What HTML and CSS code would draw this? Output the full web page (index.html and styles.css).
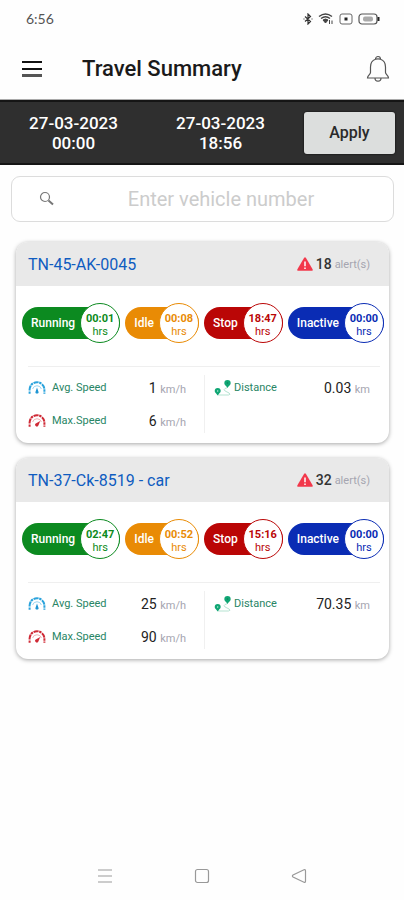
FILE: index.html
```html
<!DOCTYPE html>
<html lang="en">
<head>
<meta charset="utf-8">
<meta name="viewport" content="width=device-width, initial-scale=1">
<title>Travel Summary</title>
<link rel="stylesheet" href="styles.css">
</head>
<body>
<svg class="sprite" aria-hidden="true">
  <symbol id="alert" viewBox="0 0 16 14">
    <path d="M7 .9Q8 -.6 9 .9L15.6 12.2Q16.2 13.7 14.6 13.8H1.4Q-.2 13.7.4 12.2Z" fill="#f2384b"/>
    <path d="M8 4.4v4.8M8 10.6v1.5" stroke="#fff" stroke-width="1.5"/>
  </symbol>
  <symbol id="gauge-avg" viewBox="0 0 18 14">
    <path d="M4.600 8A4.600 4.600 0 0 1 13.400 8" fill="none" stroke="#9bd6f2" stroke-width="1"/>
    <path d="M1.600 12.800V8.600A7.400 7.400 0 0 1 16.400 8.600V12.800" fill="none" stroke="#2ba3dc" stroke-width="2" stroke-dasharray="2.400 .8 5.200 .6"/>
    <path d="M9 6.600l1.400 3.800a1.500 1.500 0 1 1-2.800 0z" fill="#2196d3"/>
  </symbol>
  <symbol id="gauge-max" viewBox="0 0 18 14">
    <path d="M4.600 8A4.600 4.600 0 0 1 13.400 8" fill="none" stroke="#f0b0b4" stroke-width="1"/>
    <path d="M1.600 12.800V8.600A7.400 7.400 0 0 1 16.400 8.600V12.800" fill="none" stroke="#cf2a36" stroke-width="2" stroke-dasharray="2.400 .8 5.200 .6"/>
    <path d="M12.200 7l-1.800 4.600a1.700 1.700 0 1 1-2.200-2.400z" fill="#cf2a36"/>
  </symbol>
  <symbol id="route" viewBox="0 0 18 18">
    <path d="M4 16h10.500q2.500-.4.600-2l-4-2q-2-1.500 0-2.500l2-.8" fill="none" stroke="#b5e3d1" stroke-width="1"/>
    <path d="M13.500 1a3.200 3.200 0 0 1 3.200 3.200c0 1.800-2 2.600-3.200 4.800-1.200-2.200-3.200-3-3.200-4.800A3.200 3.200 0 0 1 13.500 1z" fill="#10a674"/>
    <path d="M3.700 9a3 3 0 0 1 3 3c0 1.700-1.800 2.400-3 4.600-1.200-2.200-3-2.900-3-4.600a3 3 0 0 1 3-3z" fill="#10a674"/>
    <circle cx="3.700" cy="12" r=".7" fill="#c9f0e1"/>
    <circle cx="13.500" cy="4" r=".8" fill="#0b8059"/>
  </symbol>
</svg>

<div class="status">
  <span class="clock">6:56</span>
  <span class="status-icons">
    <svg width="10" height="12" viewBox="0 0 10 12" fill="none" stroke="#333"><path d="M2 3.500l5.500 5L5 11V1l2.500 2.500L2 8.500M.5 6h1M8.500 6h1" stroke-width="1.200"/></svg>
    <svg width="16" height="12" viewBox="0 0 16 12" fill="none" stroke="#444"><path d="M1 3.500Q7.500-1.500 14 3.500M3 5.500Q7.500 2 12 5.500" stroke-width="1.400"/><path d="M5 7q2.500-2 5 0L7.500 10z" fill="#444"/><path d="M11.500 7v4M14 11V7.500" stroke-width="1"/></svg>
    <svg width="14" height="12" viewBox="0 0 14 12"><rect x="1" y="1" width="12" height="10" rx="2" fill="none" stroke="#666"/><rect x="5.500" y="4.500" width="3" height="3" fill="#222"/></svg>
    <svg width="22" height="12" viewBox="0 0 22 12"><rect x="1" y="1" width="18" height="10" rx="3" fill="none" stroke="#555" stroke-width="1.200"/><rect x="5" y="3.500" width="10" height="5" rx="2" fill="#aaa"/><path d="M20.500 4v4" stroke="#222" stroke-width="2"/></svg>
  </span>
</div>

<header class="appbar">
  <button class="icon-btn" aria-label="Menu">
    <svg width="22" height="18" viewBox="0 0 22 18"><path d="M1 2h20M1 9h20" stroke="#111" stroke-width="2"/><path d="M1 15.500h20" stroke="#555" stroke-width="3"/></svg>
  </button>
  <h1>Travel Summary</h1>
  <button class="icon-btn" aria-label="Notifications">
    <svg width="24" height="28" viewBox="0 0 24 28" fill="none" stroke="#555" stroke-width="1.200"><path d="M9.500 4.300a2.500 2.800 0 1 1 5 0M9.500 4.300C6 5.500 4.500 8.500 4.500 12v5.500c0 2-3 3-3 5.500h21c0-2.500-3-3.500-3-5.500V12c0-3.500-1.500-6.500-5-7.700M9.500 4.300q2.500-.8 5 0M9 23a3 3.200 0 0 0 6 0"/></svg>
  </button>
</header>

<div class="range">
  <button class="date">27-03-2023<br>00:00</button>
  <button class="date">27-03-2023<br>18:56</button>
  <button class="apply">Apply</button>
</div>

<main>
  <label class="search">
    <svg width="16" height="16" viewBox="0 0 16 16" fill="none" stroke="#777"><circle cx="6" cy="6" r="4.500" stroke-width="1.200"/><path d="M9.500 9.500l4.500 4" stroke-width="2"/></svg>
    <input type="text" placeholder="Enter vehicle number" aria-label="Vehicle number">
  </label>

  <article class="card">
    <div class="card-head">
      <a href="#">TN-45-AK-0045</a>
      <span class="alerts"><svg width="16" height="14"><use href="#alert"/></svg><b>18</b><small>alert(s)</small></span>
    </div>
    <div class="pills">
      <div class="pill running"><span>Running</span><div class="time"><b>00:01</b>hrs</div></div>
      <div class="pill idle"><span>Idle</span><div class="time"><b>00:08</b>hrs</div></div>
      <div class="pill stop"><span>Stop</span><div class="time"><b>18:47</b>hrs</div></div>
      <div class="pill inactive"><span>Inactive</span><div class="time"><b>00:00</b>hrs</div></div>
    </div>
    <div class="stats">
      <div class="col">
        <div class="stat"><svg width="18" height="14"><use href="#gauge-avg"/></svg><span class="name">Avg. Speed</span><span class="value">1 <small>km/h</small></span></div>
        <div class="stat"><svg width="18" height="14"><use href="#gauge-max"/></svg><span class="name">Max.Speed</span><span class="value">6 <small>km/h</small></span></div>
      </div>
      <div class="col distance">
        <div class="stat"><svg width="18" height="18"><use href="#route"/></svg><span class="name">Distance</span><span class="value">0.03 <small>km</small></span></div>
      </div>
    </div>
  </article>

  <article class="card">
    <div class="card-head">
      <a href="#">TN-37-Ck-8519 - car</a>
      <span class="alerts"><svg width="16" height="14"><use href="#alert"/></svg><b>32</b><small>alert(s)</small></span>
    </div>
    <div class="pills">
      <div class="pill running"><span>Running</span><div class="time"><b>02:47</b>hrs</div></div>
      <div class="pill idle"><span>Idle</span><div class="time"><b>00:52</b>hrs</div></div>
      <div class="pill stop"><span>Stop</span><div class="time"><b>15:16</b>hrs</div></div>
      <div class="pill inactive"><span>Inactive</span><div class="time"><b>00:00</b>hrs</div></div>
    </div>
    <div class="stats">
      <div class="col">
        <div class="stat"><svg width="18" height="14"><use href="#gauge-avg"/></svg><span class="name">Avg. Speed</span><span class="value">25 <small>km/h</small></span></div>
        <div class="stat"><svg width="18" height="14"><use href="#gauge-max"/></svg><span class="name">Max.Speed</span><span class="value">90 <small>km/h</small></span></div>
      </div>
      <div class="col distance">
        <div class="stat"><svg width="18" height="18"><use href="#route"/></svg><span class="name">Distance</span><span class="value">70.35 <small>km</small></span></div>
      </div>
    </div>
  </article>
</main>

<nav class="sysnav">
  <button class="icon-btn" aria-label="Recent apps"><svg width="16" height="16" viewBox="0 0 16 16"><path d="M1 2h14M1 14h14" stroke="#999" stroke-width="1.200"/><path d="M1 8h14" stroke="#ccc" stroke-width="2"/></svg></button>
  <button class="icon-btn" aria-label="Home"><svg width="16" height="16" viewBox="0 0 16 16"><rect x="1.500" y="1.500" width="13" height="13" rx="2" fill="none" stroke="#999" stroke-width="1.200"/></svg></button>
  <button class="icon-btn" aria-label="Back"><svg width="16" height="16" viewBox="0 0 16 16"><path d="M13 1.800Q14.500 1.200 14.500 3v10q0 1.800-1.500 1.200L2 9Q.8 8 2 7z" fill="none" stroke="#999" stroke-width="1.200"/></svg></button>
</nav>
</body>
</html>
```

FILE: styles.css
```css
* {
  box-sizing: border-box;
}

body {
  margin: 0;
  min-height: 100vh;
  display: flex;
  flex-direction: column;
  background: #fefefe;
  font-family: Roboto, "Liberation Sans", sans-serif;
  color: #222;
}

.sprite {
  position: absolute;
  width: 0;
  height: 0;
}

svg {
  display: block;
  flex: none;
}

button {
  border: 0;
  padding: 0;
  background: none;
  font: inherit;
  color: inherit;
}

.status {
  display: flex;
  justify-content: space-between;
  align-items: center;
  height: 37px;
  padding: 0 24px 0 26px;
}

.clock {
  font-family: Lato, sans-serif;
  font-size: 14px;
  color: #555;
}

.status-icons {
  display: flex;
  gap: 5px;
}

.appbar {
  display: flex;
  align-items: center;
  height: 63px;
  padding: 1px 14px 0 21px;
  border-bottom: 1px solid #aaa;
}

h1 {
  flex: 1;
  margin: 0 0 0 39px;
  font-size: 22px;
  line-height: 28px;
  font-weight: 500;
  color: #1a1a1a;
}

.range {
  display: flex;
  align-items: center;
  height: 65px;
  padding: 0 9px 0 0;
  background: #2f2f2f;
  border: solid #151515;
  border-width: 2px 0;
}

.date {
  flex: 1;
  font-size: 17px;
  line-height: 20px;
  font-weight: 500;
  color: #fff;
}

.apply {
  width: 91px;
  height: 42px;
  margin-left: 10px;
  border-radius: 3px;
  background: #dcdedd;
  box-shadow: 0 0 2px #000;
  font-size: 16px;
  font-weight: 500;
  color: #2a2a2a;
}

main {
  flex: 1;
  padding: 11px 10px 0 11px;
}

.search {
  display: flex;
  align-items: center;
  height: 46px;
  padding: 0 28px 0 27px;
  border: 1px solid #dcdcdc;
  border-radius: 9px;
  background: #fff;
}

.search input {
  flex: 1;
  min-width: 0;
  margin-left: 22px;
  padding: 0;
  border: 0;
  outline: 0;
  background: none;
  font: 20px/24px Roboto, "Liberation Sans", sans-serif;
  text-align: center;
}

.search input::placeholder {
  color: #ccc;
}

.card {
  margin: 20px 5px 0;
  border-radius: 12px;
  background: #fff;
  box-shadow: 0 1px 4px rgba(0, 0, 0, 0.35);
  overflow: hidden;
}

.card + .card {
  margin-top: 15px;
}

.card-head {
  display: flex;
  align-items: center;
  justify-content: space-between;
  height: 44px;
  padding: 0 19px 0 12px;
  background: #e9e9e9;
}

.card-head a {
  font-size: 16px;
  color: #0f5cc0;
  text-decoration: none;
}

.alerts {
  display: flex;
  align-items: center;
  gap: 3px;
  font-size: 14px;
}

.alerts b {
  font-weight: 500;
  color: #333;
}

small {
  font-size: 11px;
  color: #a5a5b0;
}

.pills {
  display: flex;
  justify-content: space-between;
  padding: 17px 5px 23px 6px;
}

.pill {
  display: flex;
  align-items: center;
  justify-content: space-between;
  height: 32px;
  margin: 4px 0;
  padding-left: 9px;
  border-radius: 16px;
  background: var(--tone);
  font-size: 12px;
  font-weight: 500;
  color: #fff;
}

.pill span {
  margin-right: 5px;
}

.time {
  width: 40px;
  height: 40px;
  padding-top: 8px;
  border: 1px solid var(--tone);
  border-radius: 50%;
  background: #fff;
  font-size: 11px;
  line-height: 13px;
  font-weight: 400;
  text-align: center;
  color: var(--tone);
}

.time b {
  display: block;
  font-weight: 700;
}

.running { --tone: #0c8a20; }
.idle { --tone: #e98b05; }
.stop { --tone: #ba0606; }
.inactive { --tone: #0a2cb4; }

.stats {
  display: grid;
  grid-template-columns: 1fr 1fr;
  margin: 0 9px 0 12px;
  padding: 8px 0 2px;
  border-top: 1px solid #efefef;
}

.col {
  padding-right: 18px;
}

.distance {
  margin-bottom: 8px;
  padding: 0 10px 0 9px;
  border-left: 1px solid #f0f0f0;
}

.stat {
  display: flex;
  align-items: center;
  height: 33px;
  padding-bottom: 8px;
}

.name {
  margin-left: 6px;
  font-size: 11px;
  color: #288565;
}

.distance .name {
  margin-left: 2px;
}

.value {
  margin-left: auto;
  font-size: 14px;
  color: #222;
}

.sysnav {
  display: flex;
  justify-content: center;
  gap: 81px;
  padding: 0 0 16px;
}
```
